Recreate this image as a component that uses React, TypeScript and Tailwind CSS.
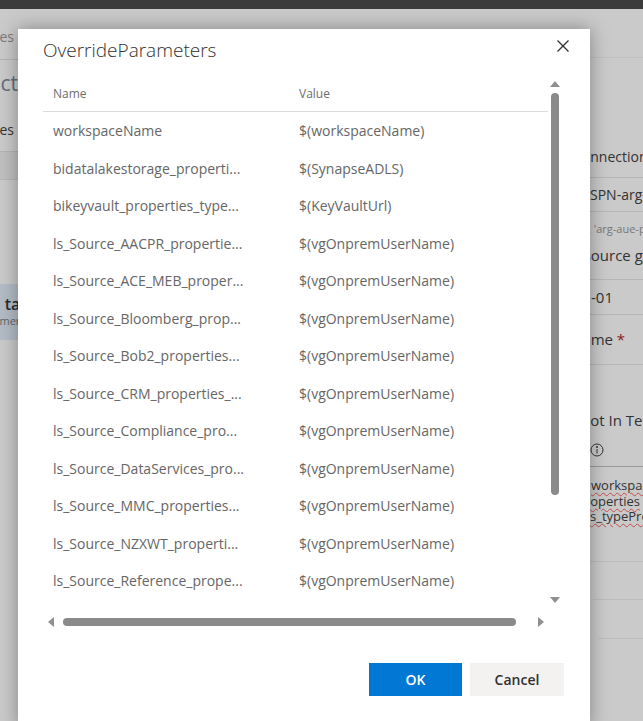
const rows: [string, string][] = [
  ["workspaceName", "$(workspaceName)"],
  ["bidatalakestorage_properti...", "$(SynapseADLS)"],
  ["bikeyvault_properties_type...", "$(KeyVaultUrl)"],
  ["ls_Source_AACPR_propertie...", "$(vgOnpremUserName)"],
  ["ls_Source_ACE_MEB_proper...", "$(vgOnpremUserName)"],
  ["ls_Source_Bloomberg_prop...", "$(vgOnpremUserName)"],
  ["ls_Source_Bob2_properties...", "$(vgOnpremUserName)"],
  ["ls_Source_CRM_properties_...", "$(vgOnpremUserName)"],
  ["ls_Source_Compliance_pro...", "$(vgOnpremUserName)"],
  ["ls_Source_DataServices_pro...", "$(vgOnpremUserName)"],
  ["ls_Source_MMC_properties...", "$(vgOnpremUserName)"],
  ["ls_Source_NZXWT_properti...", "$(vgOnpremUserName)"],
  ["ls_Source_Reference_prope...", "$(vgOnpremUserName)"],
  ["ls_Source_STAGE_propertie...", "$(vgOnpremUserName)"],
];

function Squiggle({ children }: { children: string }) {
  return (
    <div className="whitespace-nowrap text-[13px] leading-[15.5px] text-[#333] underline decoration-wavy decoration-[#c0504d] decoration-1 underline-offset-2">
      {children}
    </div>
  );
}

// page behind the modal, dimmed by the overlay
function Backdrop() {
  return (
    <div className="flex h-full flex-col">
      <div className="h-[9px] shrink-0 bg-[#3b3b3b]" />
      <div className="flex flex-1">
        <div className="w-[60px] shrink-0 overflow-hidden">
          <div className="flex h-[51px] items-center justify-end border-b border-[#b4b4b4] pt-[5px] pr-[46px]">
            <span className="whitespace-nowrap text-[14px] text-[#7a7a7a]">Linked services</span>
          </div>
          <div className="flex h-[48px] items-center whitespace-nowrap">
            <span className="-ml-[63px] text-[21px] text-[#5d6f80]">Connections</span>
          </div>
          <div className="flex h-[44px] items-center justify-end border-b border-[#b4b4b4] pr-[46px]">
            <span className="whitespace-nowrap text-[14px] text-[#333]">Properties</span>
          </div>
          <div className="h-[28px] border-b border-[#b8b8b8] bg-[#c0c0c0]" />
          <div className="h-[104px]" />
          <div className="flex h-[56px] flex-col justify-center whitespace-nowrap bg-[#b3bcc6]">
            <span className="-ml-[36px] -mt-[2px] text-[16px] font-semibold leading-[20px] text-[#2b2b2b]">
              Data target
            </span>
            <span className="-ml-[30px] text-[11px] leading-[14px] text-[#666]">Customer</span>
          </div>
        </div>
        <div className="flex-1" />
        <div className="w-[100px] shrink-0 overflow-hidden text-[14px] text-[#333]">
          <div className="h-[49px] border-b border-[#c0c0c0]" />
          <div className="flex h-[120px] items-end border-b border-[#b6b6b6] pb-[10px] pl-[30px]">
            <span className="whitespace-nowrap">Connection name</span>
          </div>
          <div className="flex h-[34px] items-center border-b border-[#b6b6b6] pl-[47px]">
            <span className="whitespace-nowrap">SPN-arg-aue-p</span>
          </div>
          <div className="flex h-[34px] items-center pl-[30px]">
            <span className="whitespace-nowrap text-[11px] text-[#777]">e.g. 'arg-aue-p-rg'</span>
          </div>
          <div className="flex h-[34px] items-start border-b border-[#b6b6b6] pl-[23px]">
            <span className="-mt-[2px] whitespace-nowrap text-[15px]">Resource group</span>
          </div>
          <div className="flex h-[35px] items-center border-b border-[#b6b6b6] pl-[48px]">
            <span className="whitespace-nowrap text-[15px]">-01</span>
          </div>
          <div className="flex h-[50px] items-center border-b border-[#b6b6b6] pl-[28px]">
            <span className="whitespace-nowrap text-[15px]">
              Name <span className="text-[#8b1a1a]">*</span>
            </span>
          </div>
          <div className="flex h-[68px] items-end pb-[2px] pl-[36px]">
            <span className="whitespace-nowrap text-[15px]">Not In Template</span>
          </div>
          <div className="flex h-[34px] items-center border-b border-[#9a9a9a] pl-[47px]">
            <svg viewBox="0 0 14 14" className="h-[14px] w-[14px]" fill="none" stroke="#333" strokeWidth="1">
              <circle cx="7" cy="7" r="6" />
              <line x1="7" y1="6" x2="7" y2="10.5" />
              <circle cx="7" cy="4" r="0.6" fill="#333" />
            </svg>
          </div>
          <div className="flex h-[95px] flex-col border-b border-[#bdbdbd] pt-[11px]">
            <div className="pl-[48px]"><Squiggle>workspaceName</Squiggle></div>
            <div className="pl-[34px]"><Squiggle>properties</Squiggle></div>
            <div className="pl-[47px]"><Squiggle>s_typeProperties</Squiggle></div>
          </div>
          <div className="ml-[50px] h-[38px] border-b border-[#bdbdbd]" />
          <div className="ml-[55px] h-[39px] border-b border-[#bdbdbd]" />
        </div>
      </div>
    </div>
  );
}

function Triangle({ dir }: { dir: "up" | "down" | "left" | "right" }) {
  const pts = {
    up: "0,6 5,0 10,6",
    down: "0,0 10,0 5,6",
    left: "6,0 6,10 0,5",
    right: "0,0 0,10 6,5",
  }[dir];
  const size = dir === "up" || dir === "down" ? "h-[6px] w-[10px]" : "h-[10px] w-[6px]";
  const vb = dir === "up" || dir === "down" ? "0 0 10 6" : "0 0 6 10";
  return (
    <svg viewBox={vb} className={size}>
      <polygon points={pts} fill="#8f8f8f" />
    </svg>
  );
}

export default function App() {
  return (
    <div className="relative h-[721px] w-full overflow-hidden bg-[#cacaca] font-['Open_Sans',sans-serif]">
      <Backdrop />

      <div
        role="dialog"
        className="absolute left-[18px] top-[29px] flex h-[700px] w-[572px] flex-col bg-white shadow-[0_0_18px_rgba(0,0,0,0.35)]"
      >
        <div className="flex items-start justify-between pl-[25px] pr-[18px] pt-[7px]">
          <h1 className="text-[19px] font-light leading-[28px] text-[#323130]">OverrideParameters</h1>
          <button className="mt-[1px] p-[3px]" aria-label="Close">
            <svg viewBox="0 0 12 12" className="h-[12px] w-[12px]" stroke="#323130" strokeWidth="1.3">
              <line x1="0.5" y1="0.5" x2="11.5" y2="11.5" />
              <line x1="11.5" y1="0.5" x2="0.5" y2="11.5" />
            </svg>
          </button>
        </div>

        <div className="mt-[12px] ml-[25px] flex w-[519px]">
          <div className="flex w-[505px] flex-col">
            <div className="flex h-[36px] items-center border-b border-[#dcdcdc] text-[12px] text-[#6e6e6e]">
              <span className="w-[256px] pl-[10px]">Name</span>
              <span>Value</span>
            </div>
            <div className="h-[501px] overflow-hidden">
              {rows.map(([name, value]) => (
                <div key={name} className="flex h-[37.5px] items-center whitespace-nowrap text-[14px] text-[#666]">
                  <span className="w-[256px] pl-[10px]">{name}</span>
                  <span>{value}</span>
                </div>
              ))}
            </div>
            <div className="flex h-[16px] items-center gap-[9px] pl-[5px] pt-[2px]">
              <Triangle dir="left" />
              <div className="h-[8px] w-[453px] rounded-full bg-[#8a8a8a]" />
              <div className="ml-[13px]">
                <Triangle dir="right" />
              </div>
            </div>
          </div>
          <div className="flex w-[14px] flex-col items-center pt-[5px]">
            <Triangle dir="up" />
            <div className="mt-[6px] h-[402px] w-[8px] rounded-full bg-[#8a8a8a]" />
            <div className="mt-[102px]">
              <Triangle dir="down" />
            </div>
          </div>
        </div>

        <div className="mt-[34px] flex justify-end gap-[8px] pr-[26px]">
          <button className="h-[33px] w-[93px] bg-[#0078d4] text-[14px] font-semibold text-white">OK</button>
          <button className="h-[33px] w-[94px] bg-[#f3f2f1] text-[14px] font-semibold text-[#323130]">Cancel</button>
        </div>
      </div>
    </div>
  );
}
